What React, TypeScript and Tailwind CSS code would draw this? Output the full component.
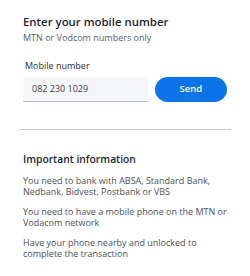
export default function App() {
  return (
    <div className="w-[250px] h-[276px] bg-white font-['Open_Sans',sans-serif] overflow-hidden">
      <div className="px-[23px] pt-[14px]">
        <h1 className="text-[11.4px] leading-[16px] font-semibold text-[#1b2632]">Enter your mobile number</h1>
        <p className="mt-[1px] text-[9px] leading-[13px] text-[#5b6066]">MTN or Vodcom numbers only</p>

        <label className="block mt-[15px] pl-[2px] text-[9px] leading-[13px] text-[#2b3036]">Mobile number</label>
        <div className="mt-[5px] flex items-center gap-[7px]">
          <div className="w-[127px] h-[25px] bg-[#f4f6f9] border-b border-[#b9bec4] flex items-center pl-[9px] text-[9px] text-[#3c4046]">
            082 230 1029
          </div>
          <button className="w-[74px] h-[25px] rounded-full bg-[#0a74e8] text-white text-[9.5px] font-semibold">
            Send
          </button>
        </div>
      </div>

      <div className="mx-[19px] mt-[27px] border-t border-[#c9c9c9]" />

      <div className="px-[23px] pt-[22px]">
        <h2 className="text-[10.3px] leading-[14px] font-semibold text-[#1b2632]">Important information</h2>
        <div className="mt-[9px] flex flex-col gap-[9px] text-[9px] leading-[11px] text-[#4d5157]">
          <p>You need to bank with ABSA, Standard Bank, Nedbank, Bidvest, Postbank or VBS</p>
          <p>You need to have a mobile phone on the MTN or Vodacom network</p>
          <p>Have your phone nearby and unlocked to complete the transaction</p>
        </div>
      </div>
    </div>
  );
}
